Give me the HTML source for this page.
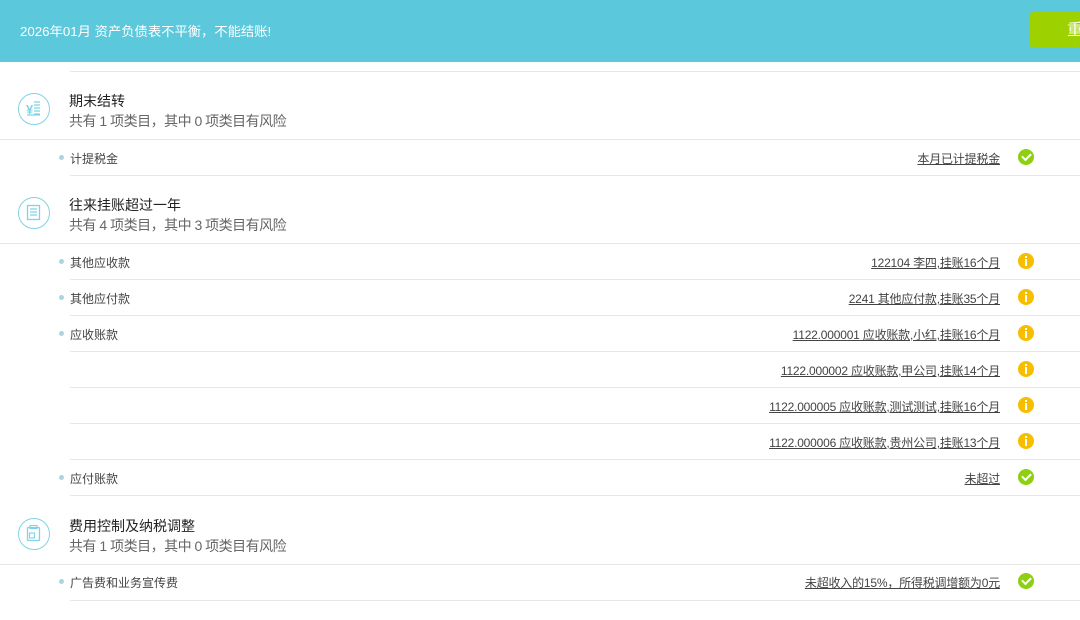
<!DOCTYPE html>
<html><head><meta charset="utf-8"><style>
*{margin:0;padding:0;box-sizing:border-box}
body{width:1080px;height:620px;overflow:hidden;background:#fff;position:relative;font-family:"Liberation Sans","Noto Sans CJK SC",sans-serif;color:#333}
.hdr{position:absolute;left:0;top:0;width:1080px;height:62px;background:#5bc8dc}
.hdr .t{position:absolute;left:20px;top:21px;font-size:13.3px;color:#fff}
.btn{position:absolute;left:1030px;top:12px;width:70px;height:36px;background:#9dd100;border-radius:3px;color:#fff;font-size:16px;line-height:38px;padding-left:37px}
.ln{position:absolute;height:1px;background:#e6e6e6;right:0}
.ic{position:absolute;left:18px;width:32px;height:32px;border:1.5px solid #7fd3e5;border-radius:50%}
.ti{position:absolute;left:69px;font-size:14px;color:#222}
.su{position:absolute;left:69px;font-size:14px;color:#666;letter-spacing:-0.5px}
.rl{position:absolute;left:70px;font-size:12px;color:#444}
.dot{position:absolute;left:59px;width:5px;height:5px;border-radius:50%;background:#a9d6df}
.rv{position:absolute;right:80px;font-size:12px;color:#444;text-decoration:underline;letter-spacing:-0.2px}
.ok,.wa{position:absolute;left:1018px;width:16px;height:16px;border-radius:50%}
.ok{background:#8fcf12}
.wa{background:#f7be00}
.ok::after{content:"";position:absolute;left:4px;top:4px;width:7px;height:4px;border-left:2px solid #fff;border-bottom:2px solid #fff;transform:rotate(-45deg)}
.wa::before{content:"";position:absolute;left:7px;top:3px;width:2px;height:2px;background:#fff}
.wa::after{content:"";position:absolute;left:7px;top:6px;width:2px;height:7px;background:#fff}
</style></head><body>
<div class="hdr"><div class="t">2026年01月 资产负债表不平衡，不能结账!</div><div class="btn">重</div></div>
<div class="ln" style="left:70px;top:71px"></div>

<div class="ic" style="top:93px"><svg width="29" height="29" viewBox="0 0 29 29"><text x="7" y="20" font-size="13" font-weight="bold" fill="#7fd3e5" font-family="Liberation Sans">¥</text><path d="M15 8h6M15 11h6M15 14h6M15 17h6M15 20h6M8 21h13" stroke="#7fd3e5" stroke-width="1.3"/></svg></div>
<div class="ti" style="top:91px">期末结转</div>
<div class="su" style="top:111px">共有 1 项类目，其中 0 项类目有风险</div>
<div class="ln" style="left:0;top:139px"></div>

<div class="ic" style="top:197px"><svg width="29" height="29" viewBox="0 0 29 29"><rect x="8.5" y="7.5" width="12" height="14" fill="none" stroke="#7fd3e5" stroke-width="1.3"/><path d="M11 11h7M11 14h7M11 17h7" stroke="#7fd3e5" stroke-width="1.2"/></svg></div>
<div class="ti" style="top:195px">往来挂账超过一年</div>
<div class="su" style="top:215px">共有 4 项类目，其中 3 项类目有风险</div>
<div class="ln" style="left:0;top:243px"></div>

<div class="ic" style="top:518px"><svg width="29" height="29" viewBox="0 0 29 29"><rect x="8.5" y="8.5" width="12" height="13" rx="1" fill="none" stroke="#7fd3e5" stroke-width="1.3"/><rect x="11" y="6.5" width="7" height="3" fill="none" stroke="#7fd3e5" stroke-width="1.1"/><rect x="10.5" y="14" width="5" height="5" fill="none" stroke="#7fd3e5" stroke-width="1.1"/></svg></div>
<div class="ti" style="top:516px">费用控制及纳税调整</div>
<div class="su" style="top:536px">共有 1 项类目，其中 0 项类目有风险</div>
<div class="ln" style="left:0;top:564px"></div>

<div class="dot" style="top:155px"></div><div class="rl" style="top:150px">计提税金</div><div class="rv" style="top:150px">本月已计提税金</div><div class="ok" style="top:149px"></div><div class="ln" style="left:70px;top:175px"></div>

<div class="dot" style="top:259px"></div><div class="rl" style="top:254px">其他应收款</div><div class="rv" style="top:254px">122104 李四,挂账16个月</div><div class="wa" style="top:253px"></div><div class="ln" style="left:70px;top:279px"></div>
<div class="dot" style="top:295px"></div><div class="rl" style="top:290px">其他应付款</div><div class="rv" style="top:290px">2241 其他应付款,挂账35个月</div><div class="wa" style="top:289px"></div><div class="ln" style="left:70px;top:315px"></div>
<div class="dot" style="top:331px"></div><div class="rl" style="top:326px">应收账款</div><div class="rv" style="top:326px">1122.000001 应收账款,小红,挂账16个月</div><div class="wa" style="top:325px"></div><div class="ln" style="left:70px;top:351px"></div>
<div class="rv" style="top:362px">1122.000002 应收账款,甲公司,挂账14个月</div><div class="wa" style="top:361px"></div><div class="ln" style="left:70px;top:387px"></div>
<div class="rv" style="top:398px">1122.000005 应收账款,测试测试,挂账16个月</div><div class="wa" style="top:397px"></div><div class="ln" style="left:70px;top:423px"></div>
<div class="rv" style="top:434px">1122.000006 应收账款,贵州公司,挂账13个月</div><div class="wa" style="top:433px"></div><div class="ln" style="left:70px;top:459px"></div>
<div class="dot" style="top:475px"></div><div class="rl" style="top:470px">应付账款</div><div class="rv" style="top:470px">未超过</div><div class="ok" style="top:469px"></div><div class="ln" style="left:70px;top:495px"></div>

<div class="dot" style="top:579px"></div><div class="rl" style="top:574px">广告费和业务宣传费</div><div class="rv" style="top:574px">未超收入的15%，所得税调增额为0元</div><div class="ok" style="top:573px"></div><div class="ln" style="left:70px;top:600px"></div>
</body></html>
